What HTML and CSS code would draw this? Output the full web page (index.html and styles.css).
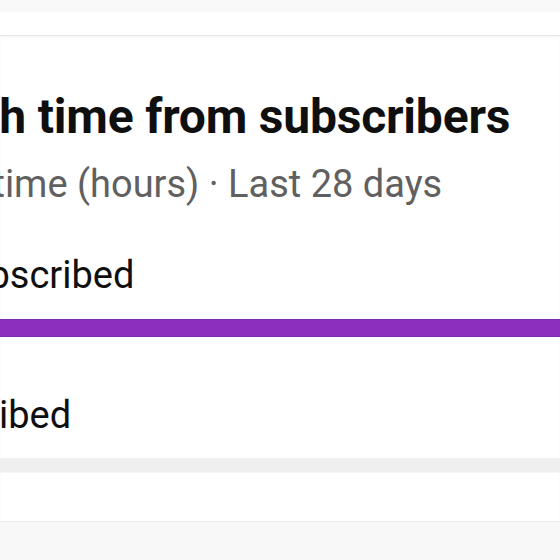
FILE: index.html
```html
<!DOCTYPE html>
<html lang="en">
<head>
    <meta charset="UTF-8">
    <meta name="viewport" content="width=device-width, initial-scale=1.0">
    <title>Watch time from subscribers</title>
    <link rel="stylesheet" href="styles.css">
</head>
<body>
    <div class="strip"></div>
    <div class="section-prev"></div>

    <div class="card">
        <div class="card-body">
            <h2 class="card-title">Watch time from subscribers</h2>
            <p class="card-sub">Watch time (hours) · Last 28 days</p>

            <div class="row row-sub">
                <div class="row-label">Subscribed</div>
                <div class="bar bar-big">
                    <div class="bar-fill" style="width: 94%"></div>
                </div>
            </div>

            <div class="row row-notsub">
                <div class="row-label">Not subscribed</div>
                <div class="bar">
                    <div class="bar-fill" style="width: 6%"></div>
                </div>
            </div>
        </div>
    </div>

    <div class="card-next"></div>
</body>
</html>
```

FILE: styles.css
```css
body {
    margin: 0;
    background-color: #f8f8f8;
    font-family: Roboto, "Liberation Sans", sans-serif;
    color: #0f0f0f;
    overflow: hidden;
}
.strip {
    height: 12px;
    background: #f9f9f9;
}
.section-prev {
    height: 23px;
    background: #fff;
}
.card {
    background: #fff;
    border-top: 1px solid #e6e6e6;
    border-bottom: 1px solid #ececec;
    box-shadow: inset 0 2px 3px rgba(0, 0, 0, 0.03);
    padding-top: 1px;
}
.card-body {
    margin-left: -108px;
    margin-right: -200px;
    padding-top: 52px;
    padding-bottom: 48px;
}
.card-title {
    margin: 0;
    font-size: 48px;
    line-height: 56px;
    font-weight: 700;
    letter-spacing: -0.2px;
}
.card-sub {
    margin: 16px 0 0 -16px;
    font-size: 38px;
    line-height: 46px;
    color: #606060;
}
.row-label {
    font-size: 38px;
    line-height: 46px;
}
.row-sub {
    margin-top: 45px;
}
.row-sub .row-label {
    margin-left: 53px;
}
.row-notsub {
    margin-top: 55px;
}
.row-notsub .row-label {
    margin-left: -78px;
}
.bar {
    margin-top: 20px;
    height: 14px;
    background: #efefef;
    border-bottom: 1px solid #f6f6f6;
}
.bar-big {
    margin-top: 21px;
    height: 18px;
    border-bottom: none;
}
.bar-fill {
    height: 100%;
    background: #8c2fbf;
    box-sizing: border-box;
    border-top: 1px solid #7b2aa9;
    border-bottom: 1px solid #7b2aa9;
}
.card-next {
    height: 40px;
}
```
